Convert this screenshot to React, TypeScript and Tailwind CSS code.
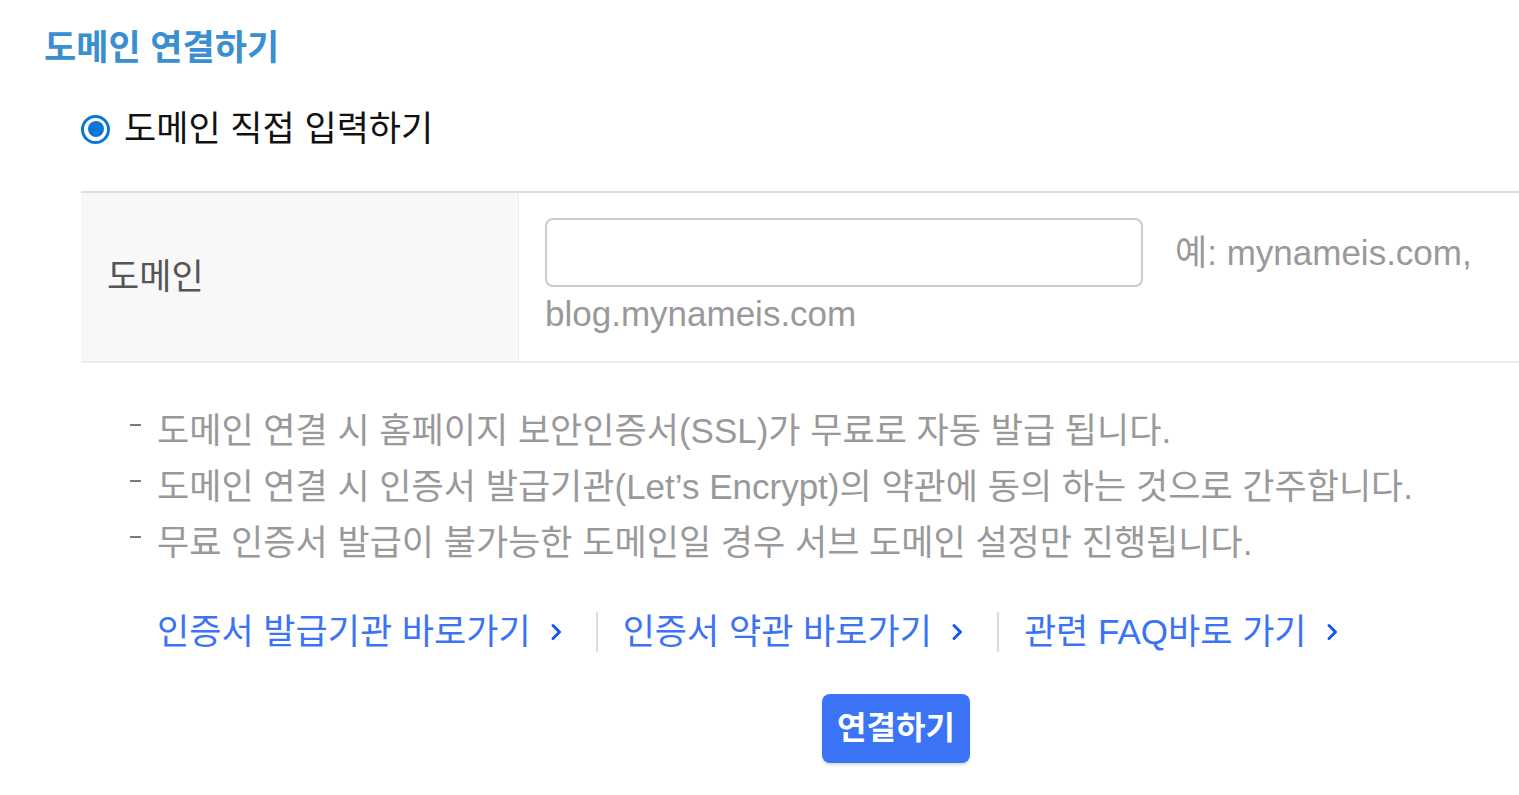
import React from 'react';

const font = "font-['Liberation_Sans','Noto_Sans_CJK_KR',sans-serif]";

const notes = [
  '도메인 연결 시 홈페이지 보안인증서(SSL)가 무료로 자동 발급 됩니다.',
  '도메인 연결 시 인증서 발급기관(Let’s Encrypt)의 약관에 동의 하는 것으로 간주합니다.',
  '무료 인증서 발급이 불가능한 도메인일 경우 서브 도메인 설정만 진행됩니다.',
];

const links = ['인증서 발급기관 바로가기', '인증서 약관 바로가기', '관련 FAQ바로 가기'];

const Chevron = () => (
  <svg width="12" height="18" viewBox="0 0 12 18" fill="none" className="shrink-0">
    <path d="M3 2.5 L9.5 9 L3 15.5" stroke="#1457ef" strokeWidth="3" strokeLinecap="round" strokeLinejoin="round" />
  </svg>
);

export default function App() {
  return (
    <div className={`w-full min-h-screen overflow-hidden bg-white ${font}`}>
      <div className="w-[1711px] pl-[44px] pt-[27px]">
        {/* 제목 */}
        <h2 className="text-[35px] leading-[42px] font-bold text-[#3a8ed2]">도메인 연결하기</h2>

        <div className="pl-[37px]">
          {/* 라디오 */}
          <label className="mt-[39px] flex items-center gap-[14px]">
            <span className="flex h-[29px] w-[29px] items-center justify-center rounded-full border-[3px] border-[#0b76d8] bg-white">
              <span className="h-[16px] w-[16px] rounded-full bg-[#0b76d8]" />
            </span>
            <span className="text-[35px] leading-[42px] text-[#111]">도메인 직접 입력하기</span>
          </label>

          {/* 도메인 입력 */}
          <div className="mt-[41px] flex border-t-2 border-b-2 border-t-[#dedede] border-b-[#ececec]">
            <div className="flex w-[438px] shrink-0 items-center border-r border-[#ececec] bg-[#f8f8f8] pl-[26px] text-[35px] text-[#555]">
              도메인
            </div>
            <div className="flex-1 pl-[26px] pr-[26px] pt-[25px] pb-[23px] text-[35px] leading-[48px] text-[#999]">
              <input
                type="text"
                className="inline-block h-[69px] w-[598px] rounded-[8px] border-2 border-[#cccccc] align-middle outline-none"
              />
              <span className="ml-[32px] align-middle">예: mynameis.com, blog.mynameis.com</span>
            </div>
          </div>

          {/* 안내 */}
          <ul className="mt-[40px] pl-[49px]">
            {notes.map((n) => (
              <li key={n} className="flex text-[35px] leading-[56px] text-[#999]">
                <span className="mt-[21px] mr-[16px] h-[2px] w-[11px] shrink-0 bg-[#767b8c]" />
                <span>{n}</span>
              </li>
            ))}
          </ul>

          {/* 링크 */}
          <div className="mt-[39px] flex items-center pl-[76px]">
            {links.map((l, i) => (
              <React.Fragment key={l}>
                {i > 0 && <span className="ml-[34px] mr-[25px] h-[40px] w-[2px] bg-[#dddddd]" />}
                <a className="flex items-center gap-[19px] text-[35px] leading-[44px] text-[#3a73f5]">
                  <span>{l}</span>
                  <Chevron />
                </a>
              </React.Fragment>
            ))}
          </div>

          {/* 버튼 */}
          <div className="mt-[40px] flex justify-center">
            <button className="h-[69px] w-[148px] rounded-[8px] bg-[#3b74f7] text-[32px] font-bold text-white shadow-[0_2px_3px_rgba(0,0,0,0.15)]">
              연결하기
            </button>
          </div>
        </div>
      </div>
    </div>
  );
}
